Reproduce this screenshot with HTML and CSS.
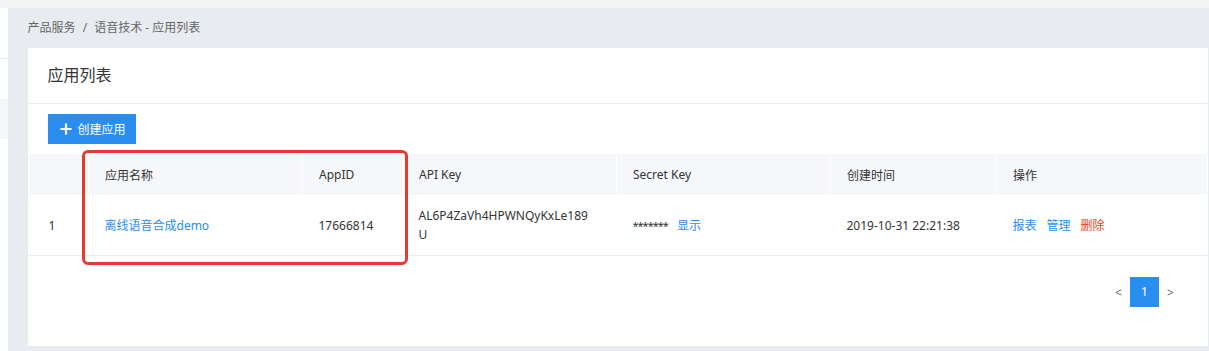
FILE: index.html
```html
<!DOCTYPE html>
<html>
<head>
<meta charset="utf-8">
<link rel="stylesheet" href="styles.css">
<title>应用列表</title>
</head>
<body>
<div class="topbar"></div>
<div class="frame">
  <div class="sidebar">
    <div class="side-head"></div>
    <div class="side-item"></div>
  </div>
  <div class="main">
    <div class="crumbs">产品服务 <span class="sep">/</span> 语音技术 - 应用列表</div>
    <div class="card">
      <div class="card-title">应用列表</div>
      <div class="toolbar">
        <button class="btn-create"><svg width="12" height="12" viewBox="0 0 12 12"><path d="M6 0.5v11M0.5 6h11" stroke="#fff" stroke-width="2.2"/></svg>创建应用</button>
      </div>
      <table class="apps">
        <colgroup>
          <col class="w-idx"><col class="w-name"><col class="w-id"><col class="w-key"><col class="w-secret"><col class="w-time"><col class="w-ops">
        </colgroup>
        <tr class="head">
          <th class="idx"></th>
          <th>应用名称</th>
          <th>AppID</th>
          <th>API Key</th>
          <th>Secret Key</th>
          <th>创建时间</th>
          <th>操作</th>
        </tr>
        <tr class="row">
          <td class="idx">1</td>
          <td><a class="link">离线语音合成demo</a></td>
          <td>17666814</td>
          <td class="key">AL6P4ZaVh4HPWNQyKxLe189U</td>
          <td><span class="stars">*******</span><a class="link show">显示</a></td>
          <td>2019-10-31 22:21:38</td>
          <td><a class="link">报表</a><a class="link">管理</a><a class="link del">删除</a></td>
        </tr>
      </table>
      <div class="pager">
        <span class="arrow">&lt;</span>
        <span class="page on">1</span>
        <span class="arrow">&gt;</span>
      </div>
    </div>
  </div>
</div>
<div class="mark"></div>
</body>
</html>
```
FILE: styles.css
```css
body {
    margin: 0;
    font-family: "Noto Sans", "Noto Sans CJK SC", sans-serif;
    font-size: 12px;
    color: #333;
    background: #e8ecf0;
    height: 351px;
    overflow: hidden;
}

.topbar {
    height: 8px;
    background: #f4f4f4;
}

.frame {
    display: flex;
    height: 343px;
}

.sidebar {
    width: 8px;
    background: #fff;
}

.side-head {
    height: 50px;
    border-bottom: 1px solid #e8e8e8;
}

.side-item {
    margin-top: 40px;
    height: 40px;
    background: #f5f6f7;
}

.main {
    flex: 1;
    padding: 0 1px 5px 20px;
    display: flex;
    flex-direction: column;
}

.crumbs {
    height: 40px;
    line-height: 40px;
    color: #666;
}

.crumbs .sep {
    margin: 0 4px;
}

.card {
    flex: 1;
    background: #fff;
}

.card-title {
    height: 55px;
    line-height: 55px;
    padding-left: 20px;
    font-size: 16px;
    color: #333;
    border-bottom: 1px solid #e8eaec;
}

.toolbar {
    padding: 10px 20px;
}

.btn-create {
    display: flex;
    align-items: center;
    gap: 6px;
    height: 30px;
    width: 88px;
    padding: 0 0 0 12px;
    border: none;
    background: #2a8ef0;
    color: #fff;
    font-family: inherit;
    font-size: 12px;
}

.apps {
    margin-left: 1px;
    width: 1179px;
    border-collapse: collapse;
    table-layout: fixed;
}

.w-idx { width: 60px; }
.w-name { width: 214px; }
.w-id { width: 100px; }
.w-key { width: 214px; }
.w-secret { width: 214px; }
.w-time { width: 166px; }
.w-ops { width: 211px; }

.apps th {
    height: 41px;
    padding: 0 0 0 16px;
    background: #f6f7fa;
    font-weight: normal;
    text-align: left;
    color: #333;
    border-right: 1px solid #fff;
}

.apps td {
    height: 60px;
    padding: 0 16px;
    border-bottom: 1px solid #e9eaf0;
    color: #333;
}

.apps .idx {
    padding-left: 20px;
}

.apps td.key {
    word-break: break-all;
    line-height: 19px;
    padding-right: 20px;
}

.stars {
    letter-spacing: -1px;
    font-size: 11px;
}

.link {
    color: #2d8cf0;
    margin-right: 10px;
}

.show {
    margin-left: 9px;
}

.del {
    color: #ed3f14;
}

.pager {
    display: flex;
    justify-content: flex-end;
    align-items: center;
    padding: 21px 26px 0 0;
}

.arrow {
    width: 15px;
    text-align: center;
    color: #666;
    margin: 0 4px;
}

.page {
    width: 29px;
    height: 30px;
    line-height: 30px;
    text-align: center;
    color: #fff;
    background: #2a8ef0;
}

.mark {
    position: absolute;
    left: 82px;
    top: 150px;
    width: 320px;
    height: 109px;
    border: 3px solid #e53a30;
    border-radius: 6px;
}
```
